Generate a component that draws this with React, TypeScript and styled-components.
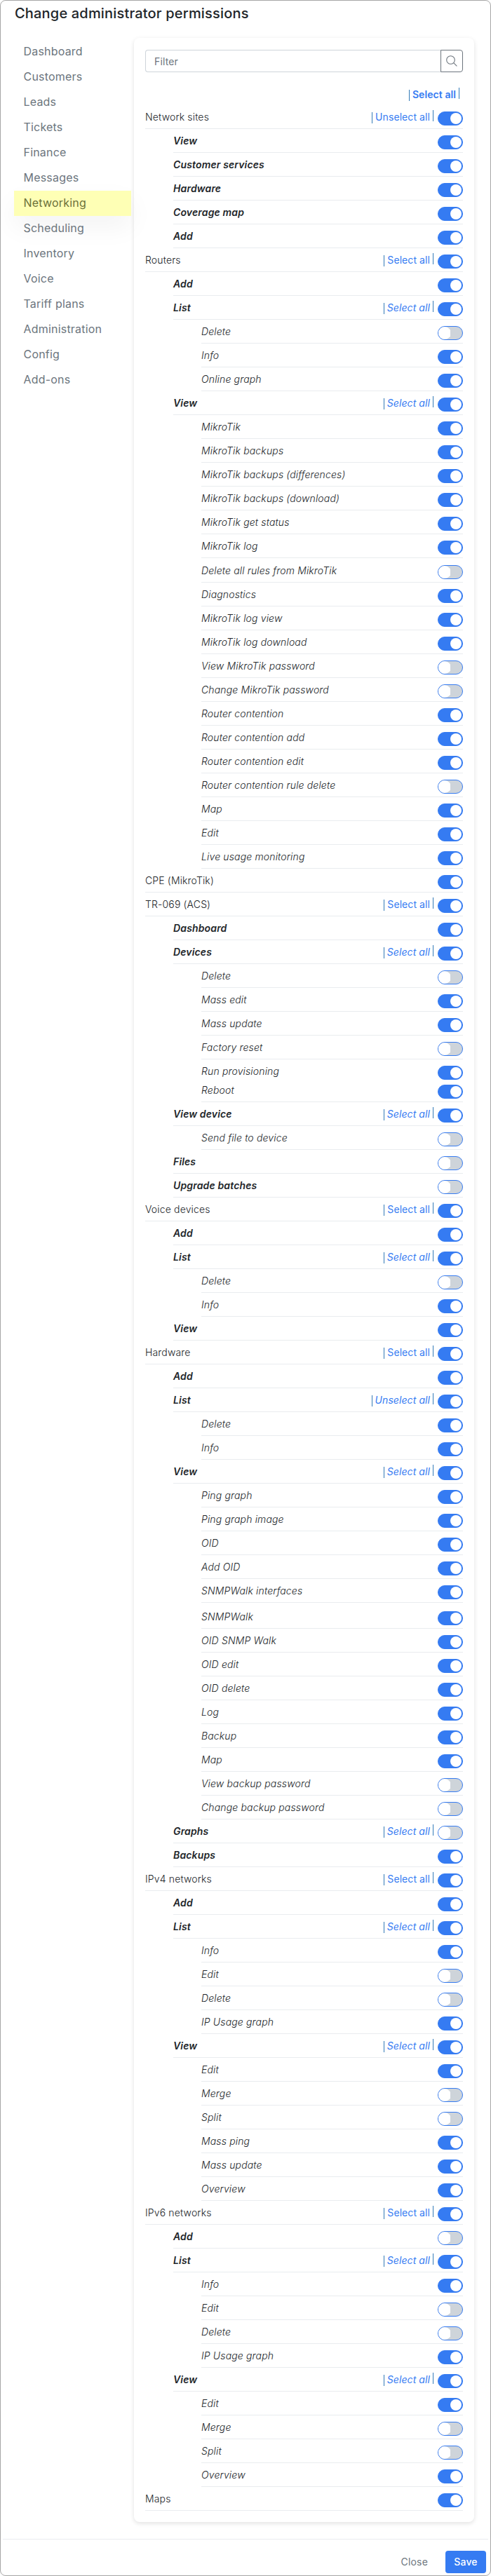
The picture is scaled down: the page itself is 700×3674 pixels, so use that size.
import React, { useState } from 'react';
import styled, { createGlobalStyle } from 'styled-components';

const GlobalStyle = createGlobalStyle`
  * { box-sizing: border-box; }
  body {
    margin: 0;
    background: #fff;
    font-family: Inter, "Liberation Sans", sans-serif;
    color: #212529;
    letter-spacing: 0.15px;
  }
`;

const Modal = styled.div`
  display: flex;
  flex-direction: column;
  width: 700px;
  height: 3674px;
  border: 1px solid #a6a6a6;
  border-radius: 8px;
  background: #fff;
`;

const Title = styled.h1`
  margin: 0;
  padding: 3px 20px 0;
  height: 53px;
  font-size: 20px;
  line-height: 30px;
  font-weight: 500;
  letter-spacing: 0.18px;
`;

const Body = styled.div`
  display: flex;
  flex: 1;
  align-items: flex-start;
  padding-left: 19px;
`;

const Sidebar = styled.nav`
  position: relative;
  z-index: 1;
  display: flex;
  flex-direction: column;
  width: 167px;
  margin-right: 4px;
  padding-top: 2px;
  letter-spacing: 0.2px;
`;

const SidebarItem = styled.a<{ $active?: boolean }>`
  height: 36px;
  padding: 0 12px 0 13.5px;
  font-size: 16px;
  line-height: 34px;
  color: ${(p) => (p.$active ? '#6c7139' : '#6c757d')};
  background: ${(p) => (p.$active ? '#feffb5' : 'transparent')};
  box-shadow: ${(p) => (p.$active ? '0 16px 36px rgba(0, 0, 0, 0.05)' : 'none')};
`;

const Panel = styled.section`
  width: 485px;
  height: 3543px;
  padding: 17px 16px 0;
  background: #fff;
  border-radius: 8px;
  box-shadow: 0 2px 6px rgba(0, 0, 0, 0.12);
`;

const FilterBar = styled.div`
  display: flex;
  height: 32px;
  font-size: 14px;
`;

const FilterField = styled.div`
  flex: 1;
  padding-left: 12px;
  line-height: 32px;
  color: #6c757d;
  border: 1px solid #ced4da;
  border-right: 0;
  border-radius: 4px 0 0 4px;
`;

const SearchButton = styled.button`
  display: flex;
  align-items: center;
  justify-content: center;
  width: 32px;
  padding: 0 0 1px;
  border: 1px solid #6c757d;
  border-radius: 0 4px 4px 0;
  background: #fff;
`;

const TopActions = styled.div`
  display: flex;
  justify-content: flex-end;
  height: 47px;
  padding: 22px 5px 0 0;
`;

const BulkLink = styled.a<{ $bold?: boolean; $italic?: boolean }>`
  display: flex;
  height: 20px;
  font-size: 14px;
  line-height: 20px;
  font-weight: ${(p) => (p.$bold ? 600 : 400)};
  font-style: ${(p) => (p.$italic ? 'italic' : 'normal')};
  letter-spacing: 0.08px;
  color: #357bf2;

  &::before,
  &::after {
    content: '';
    width: 1px;
    height: 16px;
    background: #337ab7;
  }
  &::before {
    margin: 3px 4px 0 0;
  }
  &::after {
    margin-left: 4px;
  }
`;

const Row = styled.div<{ $level: number; $gap?: number; $tight?: boolean }>`
  display: flex;
  align-items: flex-start;
  height: ${(p) => (p.$tight ? 27 : 34)}px;
  margin-top: ${(p) => p.$gap ?? 0}px;
  margin-left: ${(p) => p.$level * 40}px;
  padding-top: 7px;
  border-bottom: ${(p) => (p.$tight ? 0 : 1)}px solid #e9ecef;
`;

const Label = styled.span<{ $level: number }>`
  flex: 1;
  font-size: 14px;
  line-height: 20px;
  font-weight: ${(p) => (p.$level === 1 ? 600 : 300)};
  font-style: ${(p) => (p.$level > 0 ? 'italic' : 'normal')};
`;

const Toggle = styled.button<{ $on: boolean }>`
  display: flex;
  justify-content: ${(p) => (p.$on ? 'flex-end' : 'flex-start')};
  width: 36px;
  height: 20px;
  margin: 2px 0 0 6px;
  padding: 1px;
  border: 1px solid #357bf2;
  border-radius: 10px;
  background: ${(p) => (p.$on ? '#357bf2' : '#ced4da')};

  &::before {
    content: '';
    width: 16px;
    height: 16px;
    border-radius: 8px;
    background: #fff;
    box-shadow: ${(p) => (p.$on ? 'none' : '0 0 0 1px #fff')};
    clip-path: ${(p) => (p.$on ? 'none' : 'inset(-1px 0 -1px -1px)')};
  }
`;

const Footer = styled.footer`
  display: flex;
  align-items: flex-start;
  justify-content: flex-end;
  height: 52px;
  margin: 0 3px;
  padding: 16px 3px 0;
  border-top: 1px solid #e9ecef;
`;

const FooterButton = styled.button<{ $primary?: boolean }>`
  height: 32px;
  width: ${(p) => (p.$primary ? '58px' : 'auto')};
  padding: 0 ${(p) => (p.$primary ? 0 : 13)}px;
  border: 0;
  border-radius: 4px;
  font: ${(p) => (p.$primary ? 500 : 400)} 14px/32px Inter, sans-serif;
  letter-spacing: 0.17px;
  color: ${(p) => (p.$primary ? '#fff' : '#6c757d')};
  background: ${(p) => (p.$primary ? '#357bf2' : 'transparent')};
  margin-left: 12px;
`;

type Bulk = 'Select all' | 'Unselect all';
interface Permission {
  level: number;
  name: string;
  on: boolean;
  bulk?: Bulk;
  gap?: number;
  tight?: boolean;
}

const top = (name: string, bulk?: Bulk): Permission => ({ level: 0, name, on: true, bulk });
const group = (name: string, bulk?: Bulk, on = true): Permission => ({ level: 1, name, on, bulk });
const leaf = (name: string, on = true, extra: Partial<Permission> = {}): Permission => ({ level: 2, name, on, ...extra });

const permissions: Permission[] = [
  top('Network sites', 'Unselect all'),
  group('View'),
  group('Customer services'),
  group('Hardware'),
  group('Coverage map'),
  group('Add'),
  top('Routers', 'Select all'),
  group('Add'),
  group('List', 'Select all'),
  leaf('Delete', false),
  leaf('Info'),
  leaf('Online graph'),
  group('View', 'Select all'),
  leaf('MikroTik'),
  leaf('MikroTik backups'),
  leaf('MikroTik backups (differences)'),
  leaf('MikroTik backups (download)'),
  leaf('MikroTik get status'),
  leaf('MikroTik log'),
  leaf('Delete all rules from MikroTik', false, { gap: 1 }),
  leaf('Diagnostics'),
  leaf('MikroTik log view'),
  leaf('MikroTik log download'),
  leaf('View MikroTik password', false),
  leaf('Change MikroTik password', false),
  leaf('Router contention'),
  leaf('Router contention add'),
  leaf('Router contention edit'),
  leaf('Router contention rule delete', false),
  leaf('Map'),
  leaf('Edit'),
  leaf('Live usage monitoring'),
  top('CPE (MikroTik)'),
  top('TR-069 (ACS)', 'Select all'),
  group('Dashboard'),
  group('Devices', 'Select all'),
  leaf('Delete', false),
  leaf('Mass edit'),
  leaf('Mass update'),
  leaf('Factory reset', false),
  leaf('Run provisioning', true, { tight: true }),
  leaf('Reboot'),
  group('View device', 'Select all'),
  leaf('Send file to device', false),
  group('Files', undefined, false),
  group('Upgrade batches', undefined, false),
  top('Voice devices', 'Select all'),
  group('Add'),
  group('List', 'Select all'),
  leaf('Delete', false),
  leaf('Info'),
  group('View'),
  top('Hardware', 'Select all'),
  group('Add'),
  group('List', 'Unselect all'),
  leaf('Delete'),
  leaf('Info'),
  group('View', 'Select all'),
  leaf('Ping graph'),
  leaf('Ping graph image'),
  leaf('OID'),
  leaf('Add OID'),
  leaf('SNMPWalk interfaces'),
  leaf('SNMPWalk', true, { gap: 3 }),
  leaf('OID SNMP Walk'),
  leaf('OID edit'),
  leaf('OID delete'),
  leaf('Log'),
  leaf('Backup'),
  leaf('Map'),
  leaf('View backup password', false),
  leaf('Change backup password', false),
  group('Graphs', 'Select all', false),
  group('Backups'),
  top('IPv4 networks', 'Select all'),
  group('Add'),
  group('List', 'Select all'),
  leaf('Info'),
  leaf('Edit', false),
  leaf('Delete', false),
  leaf('IP Usage graph'),
  group('View', 'Select all'),
  leaf('Edit'),
  leaf('Merge', false),
  leaf('Split', false),
  leaf('Mass ping'),
  leaf('Mass update'),
  leaf('Overview'),
  top('IPv6 networks', 'Select all'),
  group('Add', undefined, false),
  group('List', 'Select all'),
  leaf('Info'),
  leaf('Edit', false),
  leaf('Delete', false),
  leaf('IP Usage graph'),
  group('View', 'Select all'),
  leaf('Edit'),
  leaf('Merge', false),
  leaf('Split', false),
  leaf('Overview'),
  top('Maps'),
];

const sections = [
  'Dashboard', 'Customers', 'Leads', 'Tickets', 'Finance', 'Messages', 'Networking',
  'Scheduling', 'Inventory', 'Voice', 'Tariff plans', 'Administration', 'Config', 'Add-ons',
];

function PermissionRow({ item }: { item: Permission }) {
  const [on, setOn] = useState(item.on);
  return (
    <Row $level={item.level} $gap={item.gap} $tight={item.tight}>
      <Label $level={item.level}>{item.name}</Label>
      {item.bulk && <BulkLink $italic={item.level > 0}>{item.bulk}</BulkLink>}
      <Toggle $on={on} role="switch" aria-checked={on} onClick={() => setOn(!on)} />
    </Row>
  );
}

export default function App() {
  return (
    <>
      <GlobalStyle />
      <Modal>
        <Title>Change administrator permissions</Title>
        <Body>
          <Sidebar>
            {sections.map((name) => (
              <SidebarItem key={name} $active={name === 'Networking'}>{name}</SidebarItem>
            ))}
          </Sidebar>
          <Panel>
            <FilterBar>
              <FilterField>Filter</FilterField>
              <SearchButton aria-label="Search">
                <svg width="16" height="16" viewBox="0 0 16 16" fill="none" stroke="#6c757d" strokeWidth="1.1">
                  <circle cx="6.5" cy="6.5" r="5.8" />
                  <path d="M10.7 10.7L15.4 15.4" />
                </svg>
              </SearchButton>
            </FilterBar>
            <TopActions>
              <BulkLink $bold>Select all</BulkLink>
            </TopActions>
            {permissions.map((item, i) => (
              <PermissionRow key={i} item={item} />
            ))}
          </Panel>
        </Body>
        <Footer>
          <FooterButton>Close</FooterButton>
          <FooterButton $primary>Save</FooterButton>
        </Footer>
      </Modal>
    </>
  );
}
